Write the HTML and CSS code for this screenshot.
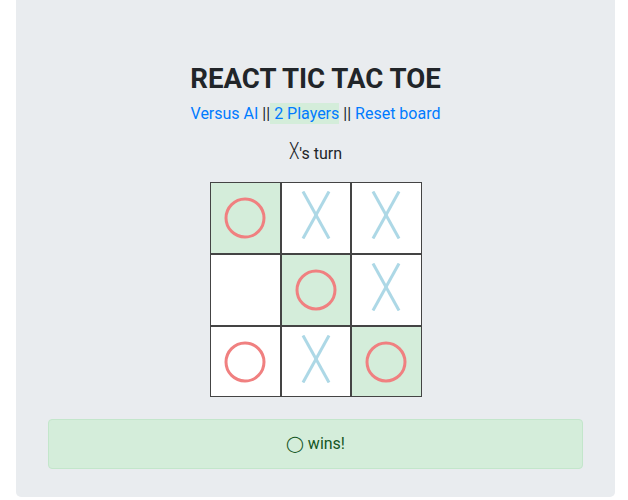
FILE: index.html
```html
<!DOCTYPE html>
<html lang="en">
<head>
<meta charset="utf-8">
<title>React Tic Tac Toe</title>
<link rel="stylesheet" href="styles.css">
</head>
<body>
<div class="jumbotron">
  <h1 class="title">REACT TIC TAC TOE</h1>
  <p class="modes"><a class="link" href="#">Versus AI</a> ||<span class="active"> <a class="link" href="#">2 Players</a></span> || <a class="link" href="#">Reset board</a></p>
  <p class="turn"><span class="turn-x">X</span>'s turn</p>
  <div class="board">
    <div class="cell win"><svg class="piece" viewBox="0 0 50 50" width="50" height="50"><circle cx="25" cy="25" r="19" class="o"/></svg></div>
    <div class="cell"><svg class="piece x-piece" viewBox="0 0 30 48" width="30" height="48"><line x1="2" y1="0.5" x2="28" y2="47.5" class="x"/><line x1="28" y1="0.5" x2="2" y2="47.5" class="x"/></svg></div>
    <div class="cell"><svg class="piece x-piece" viewBox="0 0 30 48" width="30" height="48"><line x1="2" y1="0.5" x2="28" y2="47.5" class="x"/><line x1="28" y1="0.5" x2="2" y2="47.5" class="x"/></svg></div>
    <div class="cell"></div>
    <div class="cell win"><svg class="piece" viewBox="0 0 50 50" width="50" height="50"><circle cx="25" cy="25" r="19" class="o"/></svg></div>
    <div class="cell"><svg class="piece x-piece" viewBox="0 0 30 48" width="30" height="48"><line x1="2" y1="0.5" x2="28" y2="47.5" class="x"/><line x1="28" y1="0.5" x2="2" y2="47.5" class="x"/></svg></div>
    <div class="cell"><svg class="piece" viewBox="0 0 50 50" width="50" height="50"><circle cx="25" cy="25" r="19" class="o"/></svg></div>
    <div class="cell"><svg class="piece x-piece" viewBox="0 0 30 48" width="30" height="48"><line x1="2" y1="0.5" x2="28" y2="47.5" class="x"/><line x1="28" y1="0.5" x2="2" y2="47.5" class="x"/></svg></div>
    <div class="cell win"><svg class="piece" viewBox="0 0 50 50" width="50" height="50"><circle cx="25" cy="25" r="19" class="o"/></svg></div>
  </div>
  <div class="alert"><span class="circle">◯</span> wins!</div>
</div>
</body>
</html>
```

FILE: styles.css
```css
html, body {
  margin: 0;
  padding: 0;
  background: #ffffff;
}
body {
  font-family: Roboto, "Liberation Sans", sans-serif;
  font-size: 16px;
  line-height: 1.5;
  color: #212529;
}
.jumbotron {
  margin-left: 16px;
  width: 599px;
  box-sizing: border-box;
  background: #e9ecef;
  border-radius: 0 0 5px 5px;
  padding: 62px 32px 28px;
  text-align: center;
}
.title {
  font-size: 27.6px;
  font-weight: 700;
  line-height: 1.2;
  margin: 0 0 7px;
}
.modes {
  margin: 0 0 16px;
}
.link {
  color: #007bff;
  text-decoration: none;
}
.active {
  background: #d4edda;
  padding: 1px 0;
}
.turn {
  margin: 0 0 16px;
}
.turn-x {
  display: inline-block;
  font-weight: 300;
  font-size: 17px;
  line-height: 1;
  transform: scaleY(1.42);
  transform-origin: 50% 78%;
}
.board {
  display: grid;
  grid-template-columns: 71px 70px 71px;
  grid-template-rows: 72px 72px 71px;
  width: max-content;
  margin: 0 auto 22px;
}
.cell {
  box-sizing: border-box;
  border: 1px solid #444444;
  background: #ffffff;
  display: flex;
  align-items: center;
  justify-content: center;
}
.cell.win {
  background: #d4edda;
}
.piece {
  display: block;
}
.x-piece {
  margin-top: -6px;
}
.o {
  fill: none;
  stroke: #f08080;
  stroke-width: 3;
}
.x {
  stroke: #add8e6;
  stroke-width: 3;
}
.alert {
  background: #d4edda;
  border: 1px solid #c3e6cb;
  color: #155724;
  border-radius: 4px;
  padding: 12px 20px;
}
.circle {
  font-family: "DejaVu Sans", sans-serif;
}
```
